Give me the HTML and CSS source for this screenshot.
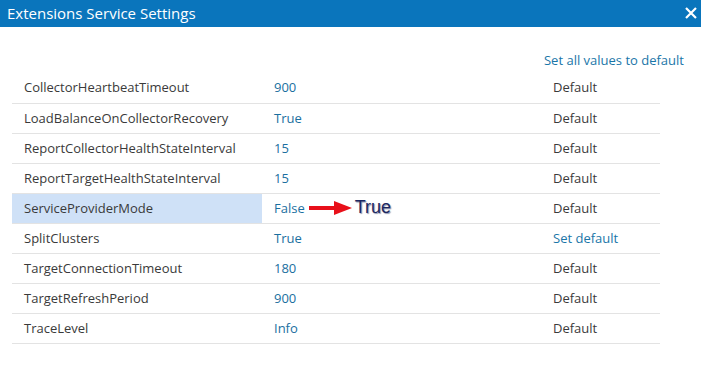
FILE: index.html
```html
<!DOCTYPE html>
<html lang="en">
<head>
  <meta charset="UTF-8" />
  <title>Extensions Service Settings</title>
  <link rel="stylesheet" href="styles.css">
</head>
<body>
  <div class="dialog">
    <div class="titlebar">
      <span class="title">Extensions Service Settings</span>
      <svg class="close" width="12" height="12" viewBox="0 0 12 12">
        <path d="M1 1 L11 11 M11 1 L1 11" stroke="#fff" stroke-width="2.2" fill="none" />
      </svg>
    </div>

    <div class="content">
      <div class="toolbar">
        <a class="link" href="#">Set all values to default</a>
      </div>

      <table class="settings">
        <tr><td class="name">CollectorHeartbeatTimeout</td><td class="value">900</td><td class="state">Default</td></tr>
        <tr><td class="name">LoadBalanceOnCollectorRecovery</td><td class="value">True</td><td class="state">Default</td></tr>
        <tr><td class="name">ReportCollectorHealthStateInterval</td><td class="value">15</td><td class="state">Default</td></tr>
        <tr><td class="name">ReportTargetHealthStateInterval</td><td class="value">15</td><td class="state">Default</td></tr>
        <tr>
          <td class="name selected">ServiceProviderMode</td>
          <td class="value">
            <span class="changed">
              False
              <svg class="arrow" width="43" height="14" viewBox="0 0 43 14">
                <rect x="0" y="5" width="26" height="4" fill="#e8101a" />
                <polygon points="25,0 43,7 25,14" fill="#e8101a" />
              </svg>
              <span class="note">True</span>
            </span>
          </td>
          <td class="state">Default</td>
        </tr>
        <tr><td class="name">SplitClusters</td><td class="value">True</td><td class="state"><a class="link" href="#">Set default</a></td></tr>
        <tr><td class="name">TargetConnectionTimeout</td><td class="value">180</td><td class="state">Default</td></tr>
        <tr><td class="name">TargetRefreshPeriod</td><td class="value">900</td><td class="state">Default</td></tr>
        <tr><td class="name">TraceLevel</td><td class="value">Info</td><td class="state">Default</td></tr>
      </table>
    </div>
  </div>
</body>
</html>
```

FILE: styles.css
```css
body {
  margin: 0;
  font-family: 'Open Sans', sans-serif;
  background: #fff;
  color: #3a3a3a;
}

.dialog {
  width: 701px;
  height: 369px;
  background: #fff;
}

.titlebar {
  height: 27px;
  background: #0a75bc;
  display: flex;
  align-items: center;
  justify-content: space-between;
  padding: 0 4px 0 7px;
}

.title {
  color: #fff;
  font-size: 15px;
  margin-top: -2px;
}

.close {
  margin-top: -2px;
}

.content {
  padding: 0 17px 0 12px;
}

.toolbar {
  display: flex;
  justify-content: flex-end;
  align-items: flex-end;
  height: 46px;
  padding-bottom: 4px;
  box-sizing: border-box;
}

.link {
  color: #1a76a8;
  text-decoration: none;
  font-size: 13px;
}

.settings {
  width: 648px;
  border-collapse: collapse;
  font-size: 13px;
}

.settings td {
  height: 30px;
  padding: 0 0 1px 12px;
  border-bottom: 1px solid #e3e3e3;
  box-sizing: border-box;
  white-space: nowrap;
}

.settings .name {
  width: 250px;
}

.settings .value {
  width: 279px;
  color: #1a6fa0;
}

.settings .state {
  padding-left: 12px;
}

.settings .selected {
  background: #cfe1f7;
}

.changed {
  display: inline-flex;
  align-items: center;
}

.arrow {
  margin: 0 3px 0 4px;
}

.note {
  font-family: 'Liberation Sans', Arial, sans-serif;
  font-size: 18px;
  color: #1c2760;
  text-shadow: 1px 1px 1px #8f96b0, -1px -1px 0 #fff;
  margin-top: -1px;
}
```
